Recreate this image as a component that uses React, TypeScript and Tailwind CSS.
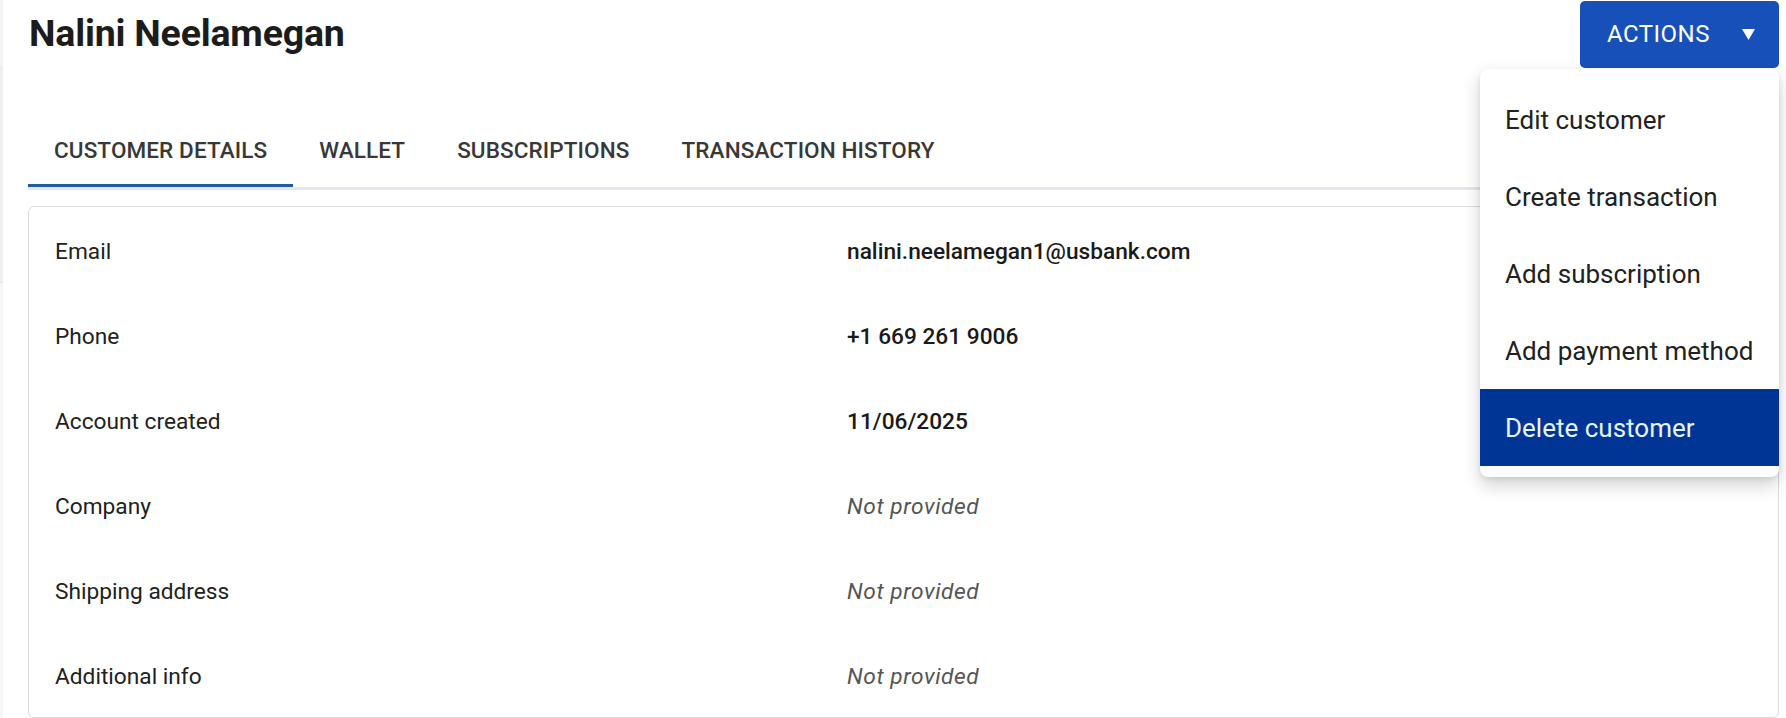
import { useState } from "react"

const TABS = ["Customer details", "Wallet", "Subscriptions", "Transaction history"]

const DETAILS: { label: string; value: string | null }[] = [
  { label: "Email", value: "nalini.neelamegan1@usbank.com" },
  { label: "Phone", value: "+1 669 261 9006" },
  { label: "Account created", value: "11/06/2025" },
  { label: "Company", value: null },
  { label: "Shipping address", value: null },
  { label: "Additional info", value: null },
]

const ACTIONS = [
  "Edit customer",
  "Create transaction",
  "Add subscription",
  "Add payment method",
  "Delete customer",
]

export default function App() {
  const [tab, setTab] = useState(0)
  const [open, setOpen] = useState(true)
  const [hovered, setHovered] = useState("Delete customer")

  return (
    <div className="relative flex h-[718px] w-full overflow-hidden bg-white font-[Roboto,sans-serif] text-[#212121]">
      {/* sidebar edge */}
      <div className="flex w-[3px] flex-col">
        <div className="h-[66px] bg-[#f4f4f4]" />
        <div className="h-[217px] border-b border-[#e4e4e4] bg-[#efefef]" />
        <div className="flex-1 bg-[#f6f6f6]" />
      </div>

      <main className="flex flex-1 flex-col pl-[25px] pr-[7px]">
        {/* header */}
        <header className="flex h-[69px] items-center justify-between">
          <h1 className="pl-[1px] text-[37.5px] font-bold leading-none tracking-[-0.005em] text-[#1c1c1c]">
            Nalini Neelamegan
          </h1>
          <button
            type="button"
            onClick={() => setOpen(!open)}
            className="flex h-[67px] w-[199px] items-center rounded-[5px] bg-[#1750b9] pl-[27px] pr-[24px] text-[24px] leading-none tracking-[0.02em] text-white"
          >
            ACTIONS
            <svg width="13" height="11" viewBox="0 0 13 11" className="ml-auto">
              <path d="M0 0H13L6.5 11Z" fill="white" />
            </svg>
          </button>
        </header>

        {/* tabs */}
        <nav className="mt-[41px] flex border-b-[3px] border-[#e3e6ec]">
          {TABS.map((t, i) => (
            <button
              key={t}
              type="button"
              onClick={() => setTab(i)}
              className={
                i === tab
                  ? "flex h-[78px] items-center border-b-[3px] border-[#245a9e] px-[26px] pt-[7px] text-[22.5px] font-medium uppercase leading-none tracking-[0.005em] text-[#383838]"
                  : "flex h-[78px] items-center border-b-[3px] border-transparent px-[26px] pt-[7px] text-[22.5px] font-medium uppercase leading-none tracking-[0.005em] text-[#383838]"
              }
            >
              {t}
            </button>
          ))}
        </nav>

        {/* details card */}
        <section className="mt-[16px] flex-1 rounded-[6px] border border-[#dcdcdc]">
          {DETAILS.map((d) => (
            <div key={d.label} className="grid h-[85px] grid-cols-[792px_1fr] items-center pl-[26px] pt-[5px] text-[22.7px] leading-none">
              <div className="text-[#212121]">{d.label}</div>
              {d.value ? (
                <div className="font-medium text-[#1a1a1a]">{d.value}</div>
              ) : (
                <div className="italic tracking-[0.025em] text-[#555555]">Not provided</div>
              )}
            </div>
          ))}
        </section>
      </main>

      {/* actions menu */}
      {open && (
        <div className="absolute right-[7px] top-[69px] w-[299px] rounded-[8px] bg-white pb-[11px] pt-[12px] shadow-[0_8px_18px_rgba(0,0,0,0.18),0_2px_5px_rgba(0,0,0,0.08)]">
          {ACTIONS.map((a) => (
            <div
              key={a}
              onMouseEnter={() => setHovered(a)}
              className={
                a === hovered
                  ? "flex h-[77px] items-center bg-[#003595] pl-[25px] text-[26px] leading-none text-[#e8f4ff]"
                  : "flex h-[77px] items-center pl-[25px] text-[26px] leading-none text-[#212121]"
              }
            >
              {a}
            </div>
          ))}
        </div>
      )}
    </div>
  )
}
